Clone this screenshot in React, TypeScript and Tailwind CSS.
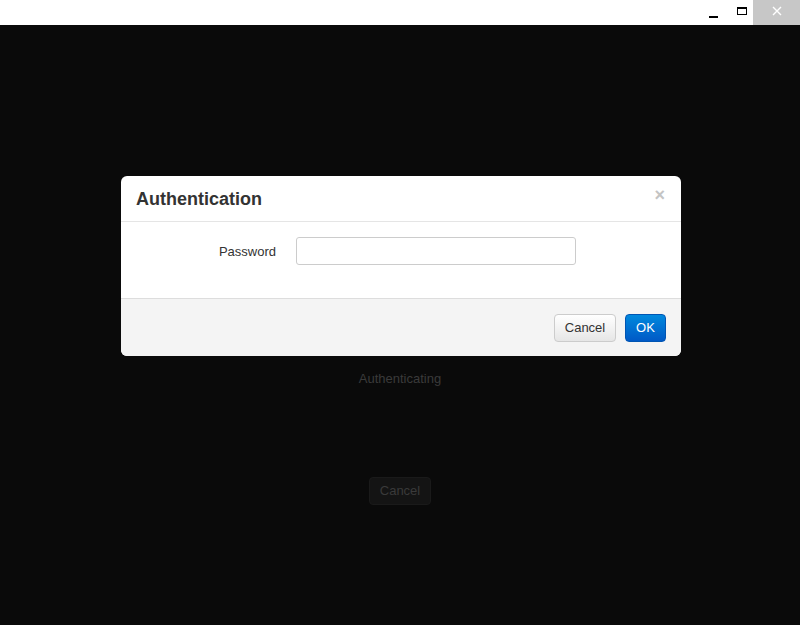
import React from "react";

export default function App() {
  return (
    <div
      className="w-[800px] h-[625px] flex flex-col overflow-hidden"
      style={{ fontFamily: '"Liberation Sans", Arial, sans-serif' }}
    >
      {/* title bar */}
      <div className="h-[25px] bg-white flex justify-end items-stretch shrink-0">
        <div className="w-[37px] flex items-center justify-center">
          <div className="w-[9px] h-[2px] bg-black mt-[8px] ml-[2px]" />
        </div>
        <div className="w-[22px] flex items-center justify-center">
          <div className="w-[10px] h-[8px] border border-black border-t-2 mb-[3px]" />
        </div>
        <div className="w-[47px] bg-[#c7c7c7] flex items-center justify-center">
          <svg width="10" height="10" viewBox="0 0 10 10" className="mb-[3px]">
            <path d="M1 1 L9 9 M9 1 L1 9" stroke="white" strokeWidth="1.4" />
          </svg>
        </div>
      </div>

      {/* dark content */}
      <div className="relative flex-1 bg-[#0a0a0a] flex flex-col items-center">
        <div className="mt-[344px] text-[13px] text-[#3a3a3a]">Authenticating</div>
        <div className="mt-[88px] w-[62px] h-[28px] rounded-[4px] bg-[#141414] border border-[#1a1a1a] flex items-center justify-center text-[13px] text-[#3a3a3a]">
          Cancel
        </div>

        {/* modal */}
        <div className="absolute left-[121px] top-[151px] w-[560px] h-[180px] bg-white rounded-[6px] flex flex-col overflow-hidden">
          <div className="h-[46px] shrink-0 border-b border-[#e5e5e5] flex items-center justify-between pl-[15px] pr-[16px]">
            <div className="text-[18px] font-bold text-[#333] pt-[1px]">Authentication</div>
            <div className="text-[18px] font-bold text-[#c4c4c4] -mt-[6px]">×</div>
          </div>
          <div className="flex-1 flex items-start pt-[15px]">
            <div className="w-[155px] text-right text-[13px] text-[#333] pt-[5px]">Password</div>
            <div className="ml-[20px] w-[280px] h-[28px] border border-[#cccccc] rounded-[3px] bg-white" />
          </div>
          <div className="h-[58px] shrink-0 bg-[#f4f4f4] border-t border-[#dddddd] flex items-center justify-end gap-[9px] pr-[15px]">
            <div className="w-[62px] h-[28px] rounded-[4px] border border-[#cccccc] bg-gradient-to-b from-white to-[#e6e6e6] flex items-center justify-center text-[13px] text-[#333]">
              Cancel
            </div>
            <div className="w-[41px] h-[28px] rounded-[4px] border border-[#0055b3] bg-gradient-to-b from-[#0088dd] to-[#0059c6] flex items-center justify-center text-[13px] text-white">
              OK
            </div>
          </div>
        </div>
      </div>
    </div>
  );
}
